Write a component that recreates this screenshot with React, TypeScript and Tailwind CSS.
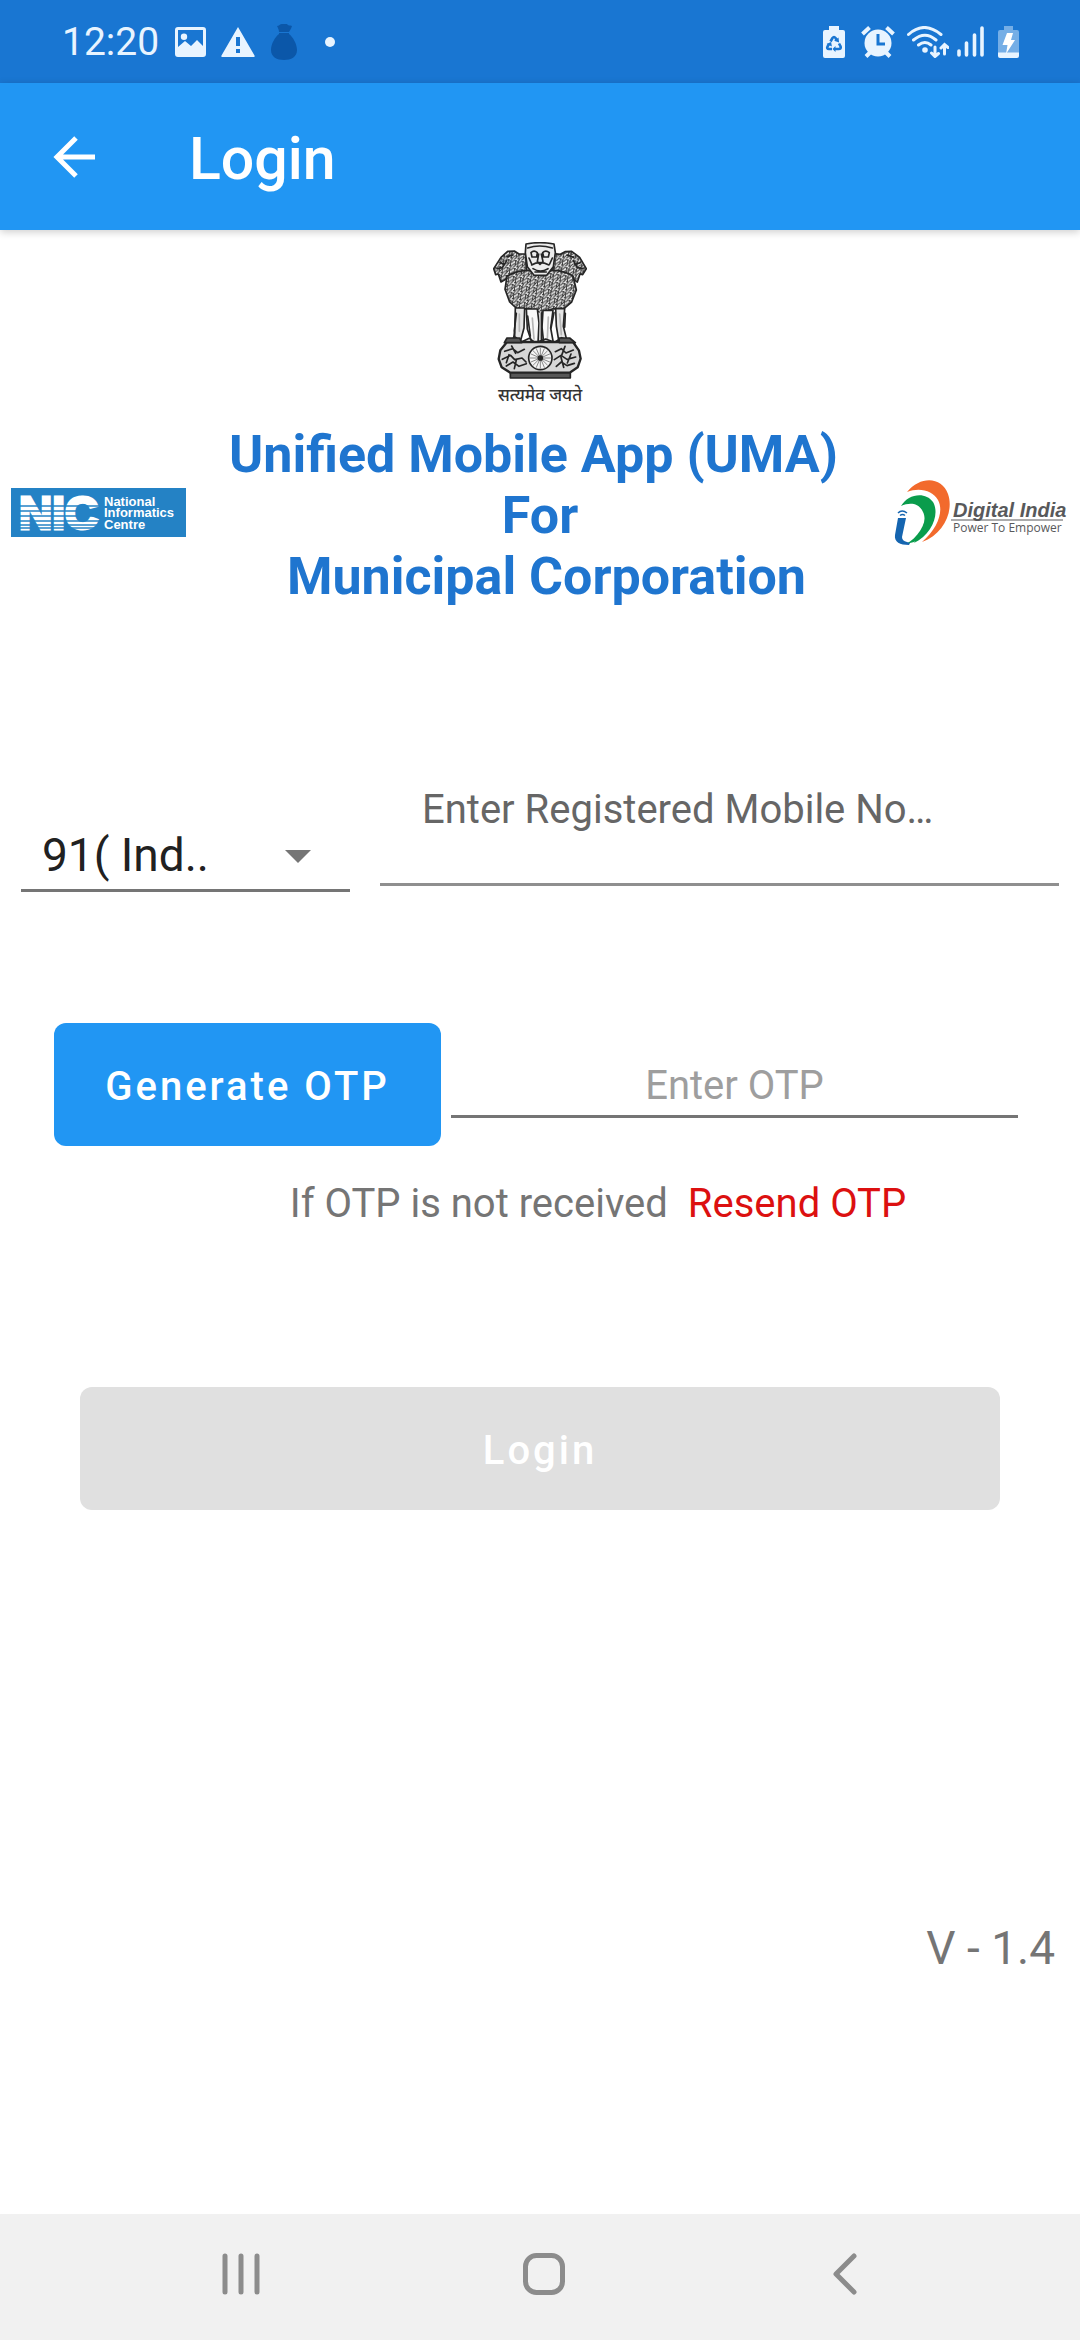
import { useState } from "react";

function StatusBar() {
  return (
    <div className="flex h-[83px] items-center bg-[#1976d2] pl-[62px] pr-[61px] text-[#e8f4ff]">
      <span className="text-[39px] leading-[48px]">12:20</span>
      <svg viewBox="0 0 31 30" className="ml-4 h-[30px] w-[31px]" aria-hidden="true">
        <path
          fill="currentColor"
          fillRule="evenodd"
          d="M3 0h25a3 3 0 0 1 3 3v24a3 3 0 0 1-3 3H3a3 3 0 0 1-3-3V3a3 3 0 0 1 3-3Zm0 3v17l7-6 6 5 6-6 6 6V3ZM9 6.500a3.200 3.200 0 1 1 0 6.400a3.200 3.200 0 0 1 0-6.400Z"
        />
      </svg>
      <svg viewBox="0 0 34 30" className="ml-[15px] h-[30px] w-[34px]" aria-hidden="true">
        <path
          fill="currentColor"
          fillRule="evenodd"
          d="M17 0 33.500 28.500a1 1 0 0 1-.8 1.500H1.300a1 1 0 0 1-.8-1.500ZM15 10v9h4v-9Zm0 12v4h4v-4Z"
        />
      </svg>
      <svg viewBox="0 0 26 36" className="ml-4 h-9 w-[26px] text-[#0b57a9]" aria-hidden="true">
        <path
          fill="currentColor"
          d="M6 2c2 0 3-2 5-2h5c1 2 3 1 5 2-1 3-2 4-3 6H8C8 6 7 4 6 2Zm2 7h10v1c4 3 8 10 8 16 0 7-6 10-13 10S0 33 0 26c0-6 4-13 8-16Z"
        />
      </svg>
      <span className="ml-7 size-[10px] rounded-full bg-current" />

      <div className="ml-auto flex items-center">
        <svg viewBox="0 0 22 32" className="h-8 w-[22px]" aria-hidden="true">
          <path fill="currentColor" d="M6 0h10v4h4a2 2 0 0 1 2 2v24a2 2 0 0 1-2 2H2a2 2 0 0 1-2-2V6a2 2 0 0 1 2-2h4Z" />
          <g fill="none" stroke="#1976d2" strokeWidth="2.600">
            <path d="m7.500 15.500 2-3.500q1.500-2 3 0l1.500 2.600" />
            <path d="m16 17.500 1.600 3q.8 2.500-2 2.500H12" />
            <path d="M9 23H6q-2.600-.2-1.500-2.500L6 18" />
          </g>
          <path fill="#1976d2" d="m15.500 11.500.6 5-5-1.800ZM12.500 20v6l-3-3ZM3.500 18l4.600-2 .8 4.600Z" />
        </svg>
        <svg viewBox="0 0 34 32" className="ml-4 h-8 w-[34px]" aria-hidden="true">
          <g fill="none" stroke="currentColor" strokeWidth="4">
            <path d="m1.500 8 7-6.500M32.500 8l-7-6.500M5 30.500l5-5M29 30.500l-5-5" />
          </g>
          <circle cx="17" cy="17" r="13.500" fill="currentColor" />
          <path d="M17 8v10h7" fill="none" stroke="#1976d2" strokeWidth="3" />
        </svg>
        <svg viewBox="0 0 42 32" className="ml-3 h-8 w-[42px]" aria-hidden="true">
          <g fill="none" stroke="currentColor" strokeWidth="3" strokeLinecap="round">
            <path d="M1.500 8.500q15.500-14 32.500 0M6.500 14q11.500-9.500 22.500 0M11.500 19q6.500-5 12.500 0" />
            <path d="M28 21v9m-3.500-3 3.500 3.500 3.500-3M37.500 28v-9m-3.500 3 3.500-3.500 3.500 3" />
          </g>
          <circle cx="18" cy="24" r="2.800" fill="currentColor" />
        </svg>
        <svg viewBox="0 0 27 31" className="ml-2 h-[31px] w-[27px]" aria-hidden="true">
          <path
            d="M2 25v4M9.500 17v12M17.500 9v20M25 2v27"
            fill="none"
            stroke="currentColor"
            strokeWidth="3.600"
            strokeLinecap="round"
          />
        </svg>
        <svg viewBox="0 0 21 32" className="ml-[14px] h-8 w-[21px]" aria-hidden="true">
          <path fill="#75aee6" d="M6 0h9v4h4a2 2 0 0 1 2 2v21H0V6a2 2 0 0 1 2-2h4Z" />
          <path fill="currentColor" d="M0 26.500h21V30a2 2 0 0 1-2 2H2a2 2 0 0 1-2-2Z" />
          <path fill="#fff" d="M9 7h6l-2 7h4L8 28l1.500-9H4.500Z" />
        </svg>
      </div>
    </div>
  );
}

function AppBar() {
  return (
    <header className="relative flex h-[147px] items-center bg-[#2196f3] pl-[53px] text-white shadow-[0_2px_8px_rgba(0,0,0,0.2)]">
      <button type="button" aria-label="Back" className="size-[42px]">
        <svg viewBox="0 0 42 42" className="size-full" aria-hidden="true">
          <path d="M42 21H4M23 2 4 21l19 19" fill="none" stroke="currentColor" strokeWidth="5" />
        </svg>
      </button>
      <h1 className="ml-[94px] pt-1 text-[59px] leading-[68px] font-medium">Login</h1>
    </header>
  );
}

function Emblem() {
  return (
    <svg viewBox="70 38 282 411" className="h-[137px] w-[94px]" role="img" aria-label="State Emblem of India">
      <defs>
        <pattern id="mane" width="22" height="24" patternUnits="userSpaceOnUse" patternTransform="rotate(8)">
          <rect width="22" height="24" fill="#ececec" />
          <path
            d="M0 4q6 8 11 0t11 0M-3 16q7 9 13 0t13 0M5 0q-4 12 2 24M17 2q4 10-2 20M0 11l6-4M12 22l7-5"
            fill="none"
            stroke="#333"
            strokeWidth="3"
          />
        </pattern>
      </defs>
      <g stroke="#252525" strokeWidth="5" strokeLinejoin="round" strokeLinecap="round">
        <path
          fill="url(#mane)"
          d="m72 118 22-34 20-18 20-1 14 9h20l4 64-64 12-14 8-8-24-8 2Z"
        />
        <path
          fill="url(#mane)"
          d="m350 118-20-34-24-18-20 1-14 8-20-2-3 65 62 12 12 8 8-24 8 2Z"
        />
        <path fill="url(#mane)" d="M112 140q50-26 100-12 55-14 98 12l10 42-14 36-26 22-30-2-34 12-36-12-36 2-24-22-14-38Z" />
        <path fill="#ececec" d="M169 44q42-8 84 0l4 26-6 42-20 26h-38l-20-26-6-42Z" />
        <path
          fill="none"
          d="M174 56q35-12 74 0M184 70q9-9 19 0l-2 13h-14ZM219 70q9-9 20 0l-3 13h-14ZM207 74l-4 23 8 8 9-8-5-23M186 107q24-14 52 0M190 118q22 14 45 0M178 86l8 18M248 86l-8 18M196 128h34"
        />
        <path fill="none" d="m82 118 16-3 13-21M91 100l12 4M340 118l-17-3-12-21M332 100l-12 4M112 82l18-5M292 77l20 7" />
        <path fill="#e4e4e4" d="M137 236h28l-2 60-12 44h-22l6-30Z" />
        <path fill="#f8f8f8" d="M170 239h33l5 42-3 60h-18l-14-42Z" />
        <path fill="#f8f8f8" d="M220 243h30l-7 53 8 44h-29l-5-47Z" />
        <path fill="#e4e4e4" d="M258 238h27l-4 53 12 48h-25l-8-49Z" />
        <path fill="none" strokeWidth="5" d="M149 254v52M188 266l5 63M212 247v94M236 263l-3 66M270 254l5 62" stroke="#b5b5b5" />
        <path fill="none" d="M140 252l-6 52 2 28M174 260l8 60M216 252v84M253 250l-9 46M287 252l-2 42M120 333l18-9 17 14 24-11 18 13 31-11 26 10 22-14 25 12" />
        <path fill="#d7d7d7" strokeWidth="7" d="M112 338h198l18 26 5 24-9 26-24 16H122l-26-16-9-25 5-26Z" />
        <path fill="#565656" d="M112 326h38l6 14h-52ZM268 326h32l17 14h-48ZM122 431h180v15H122Z" />
        <path
          fill="none"
          d="M105 366l24-8 15 12 20-10M98 390l25-12 12 13 22-5 12 12M110 410l20-12 18 13 22-8M257 367l18-9 14 13 22-9M254 391l20-13 18 12 26-7M260 411l15-13 17 11 22-7M126 350l12 22M286 351l-9 24M304 374l-11 27M118 376l-8 24M140 392l-6 26M274 384l8 30"
        />
        <circle cx="212" cy="386" r="35" fill="#f3f3f3" />
        <g strokeWidth="3" stroke="#888">
          <path d="M212 356v60M182 386h60M191 365l42 42M233 365l-42 42M200 358l24 56M224 358l-24 56M184 374l56 24M184 398l56-24" />
        </g>
        <circle cx="212" cy="386" r="6" fill="#252525" />
      </g>
    </svg>
  );
}

function NicLogo() {
  return (
    <svg
      viewBox="0 0 175 49"
      className="h-[49px] w-[175px] overflow-visible"
      role="img"
      aria-label="National Informatics Centre"
    >
      <rect width="175" height="49" fill="#2482c5" />
      <text
        x="8"
        y="41"
        fontSize="46"
        fontWeight="700"
        fill="#fff"
        stroke="#fff"
        strokeWidth="3"
        className="font-['Liberation_Sans',sans-serif]"
      >
        NIC
      </text>
      <path d="M8 18h81M8 23h81M8 28h81M8 33h81M8 37h81M8 40h81" stroke="#2482c5" strokeWidth="1.300" />
      <g fontSize="13" fontWeight="700" fill="#fff" className="font-['Liberation_Sans',sans-serif]">
        <text x="93" y="18">National</text>
        <text x="93" y="29">Informatics</text>
        <text x="93" y="41">Centre</text>
      </g>
    </svg>
  );
}

function DigitalIndiaLogo() {
  return (
    <svg viewBox="0 0 175 67" className="h-[67px] w-[175px]" role="img" aria-label="Digital India, Power To Empower">
      <path fill="#f26a2c" d="M13 13C27-4 48-2 54 15c6 17-4 40-26 48 16-14 22-31 16-42-5-9-18-13-31-8Z" />
      <path fill="#0a9c4c" d="M7 27C14 15 31 12 39 23c7 12-1 32-19 41 9-12 13-23 9-31-4-9-13-10-22-6Z" />
      <path fill="#0a9c4c" d="M32 31c7 12-1 27-12 32l-8 2c11-6 20-18 20-34Z" />
      <path fill="#1565b0" d="M4 39h8L8 58q0 4 5 5l3 1-1 2C6 66 0 63 1 56Z" />
      <path d="M4 34q4-4 9 0M6 36.500q2.500-2 5 0" fill="none" stroke="#1565b0" strokeWidth="1.500" />
      <g fill="#58595b">
        <text
          x="59"
          y="38"
          fontSize="20"
          fontWeight="700"
          fontStyle="italic"
          className="font-['Liberation_Sans',sans-serif]"
        >
          Digital India
        </text>
        <text x="59" y="53" fontSize="12" className="font-['Open_Sans',sans-serif]">
          Power To Empower
        </text>
      </g>
      <path d="M57 41h112" stroke="#58595b" strokeWidth="1" />
    </svg>
  );
}

function Branding() {
  return (
    <section className="flex flex-col pt-3">
      <div className="flex h-[182px] flex-col items-center">
        <Emblem />
        <span className="text-[17px] leading-[32px] font-medium text-[#333]">सत्यमेव जयते</span>
      </div>
      <div className="grid grid-cols-[175px_1fr_175px] items-center px-[11px]">
        <div className="pb-1.5">
          <NicLogo />
        </div>
        <h2 className="text-center text-[52px] leading-[61px] font-bold whitespace-nowrap text-[#1f75cf]">
          Unified Mobile App (UMA)&nbsp;
          <br />
          For
          <br />
          &nbsp;Municipal Corporation
        </h2>
        <div className="pb-1.5">
          <DigitalIndiaLogo />
        </div>
      </div>
    </section>
  );
}

function LoginForm() {
  const [mobile, setMobile] = useState("");
  const [otp, setOtp] = useState("");

  return (
    <form className="mt-[179px] flex flex-col" onSubmit={(e) => e.preventDefault()}>
      <div className="flex items-end gap-[30px] px-[21px]">
        <div className="grid w-[329px] items-center">
          <select
            aria-label="Country code"
            className="col-start-1 row-start-1 h-[72px] w-full appearance-none border-b-3 border-[#757575] bg-transparent pl-[21px] text-[46px] leading-[54px] text-[#212121] outline-none"
          >
            <option>91( Ind..</option>
          </select>
          <svg
            viewBox="0 0 26 13"
            className="pointer-events-none col-start-1 row-start-1 mr-[39px] h-[13px] w-[26px] justify-self-end"
            aria-hidden="true"
          >
            <path d="M0 0h26L13 13Z" fill="#757575" />
          </svg>
        </div>
        <div className="mb-[6px] flex flex-1 flex-col">
          <label htmlFor="mobile" className="pl-[42px] text-[40px] leading-[47px] text-[#666]">
            Enter Registered Mobile No…
          </label>
          <input
            id="mobile"
            type="tel"
            value={mobile}
            onChange={(e) => setMobile(e.target.value)}
            className="h-[53px] w-full border-b-3 border-[#8f8f8f] pl-[42px] text-[40px] leading-[47px] outline-none"
          />
        </div>
      </div>

      <div className="mt-[131px] flex items-center gap-[10px] pr-[62px] pl-[54px]">
        <button
          type="button"
          className="h-[123px] w-[387px] rounded-xl bg-[#2196f3] pt-1 text-[40px] leading-[47px] font-medium tracking-[3px] text-white"
        >
          Generate OTP
        </button>
        <input
          type="text"
          aria-label="Enter OTP"
          placeholder="Enter OTP"
          value={otp}
          onChange={(e) => setOtp(e.target.value)}
          className="h-[66px] min-w-0 flex-1 border-b-3 border-[#757575] pt-1 text-center text-[40px] leading-[47px] outline-none placeholder:text-[#9e9e9e]"
        />
      </div>

      <p className="mt-[34px] flex justify-center gap-5 pl-[116px] text-[40px] leading-[47px] text-[#757575]">
        If OTP is not received
        <a href="#resend" className="text-[#dc1010]">
          Resend OTP
        </a>
      </p>

      <button
        type="submit"
        disabled
        className="mx-20 mt-[160px] h-[123px] rounded-xl bg-[#e0e0e0] pt-1 text-[40px] leading-[47px] font-medium tracking-[3px] text-white"
      >
        Login
      </button>
    </form>
  );
}

function NavBar() {
  return (
    <nav className="mt-auto flex h-[126px] items-center justify-between bg-[#f1f1f1] px-[220px] pb-[7px] text-[#8c8c8c]">
      <button type="button" aria-label="Recent apps">
        <svg viewBox="0 0 42 42" className="size-[42px]" aria-hidden="true">
          <path d="M5 3v36M21 3v36M37 3v36" stroke="currentColor" strokeWidth="5" strokeLinecap="round" />
        </svg>
      </button>
      <button type="button" aria-label="Home">
        <svg viewBox="0 0 42 42" className="size-[42px]" aria-hidden="true">
          <rect x="2.500" y="2.500" width="37" height="37" rx="11" fill="none" stroke="currentColor" strokeWidth="5" />
        </svg>
      </button>
      <button type="button" aria-label="Back">
        <svg viewBox="-6 0 34 42" className="h-[42px] w-[34px]" aria-hidden="true">
          <path
            d="M22 3 4 21l18 18"
            fill="none"
            stroke="currentColor"
            strokeWidth="5"
            strokeLinecap="round"
            strokeLinejoin="round"
          />
        </svg>
      </button>
    </nav>
  );
}

export default function App() {
  return (
    <div className="flex min-h-screen flex-col bg-white font-[Roboto,'Noto_Sans',sans-serif]">
      <StatusBar />
      <AppBar />
      <main className="flex flex-col">
        <Branding />
        <LoginForm />
        <p className="mt-[411px] pr-[25px] text-right text-[46px] leading-[54px] text-[#757575]">V - 1.4</p>
      </main>
      <NavBar />
    </div>
  );
}
